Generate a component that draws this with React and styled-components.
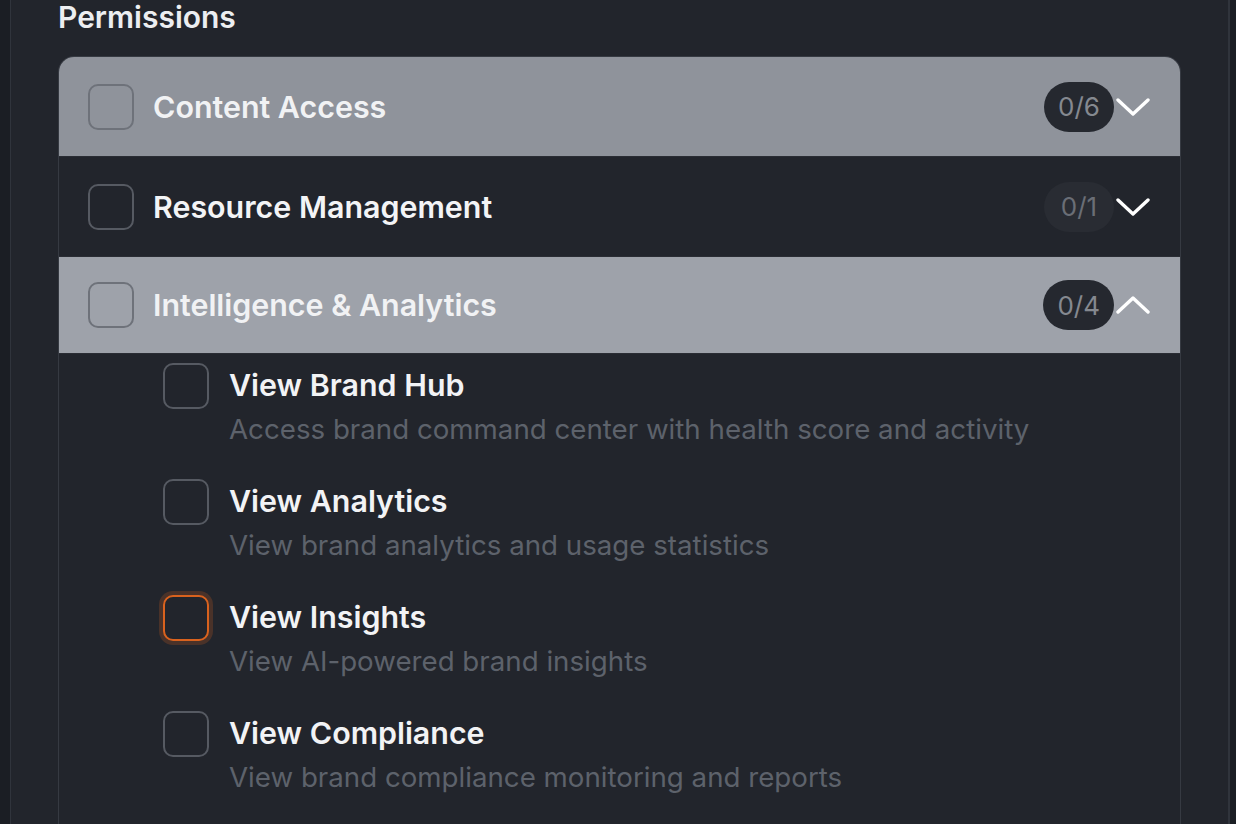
import React from "react";
import styled, { createGlobalStyle, css } from "styled-components";

const Global = createGlobalStyle`
  html, body { margin: 0; padding: 0; background: #1b1e24; }
  body { font-family: Inter, "Noto Sans", sans-serif; -webkit-font-smoothing: antialiased; }
  * { box-sizing: border-box; }
`;

const Page = styled.div`
  height: 824px;
  overflow: hidden;
  padding-left: 10px;
  display: flex;
`;

const Panel = styled.div`
  width: 1220px;
  height: 100%;
  background: #22252c;
  border-left: 1px solid #30343c;
  border-right: 2px solid #30343c;
  padding: 0 47px 0 47px;
  display: flex;
  flex-direction: column;
`;

const Heading = styled.h2`
  margin: 0;
  flex: none;
  font-size: 30px;
  line-height: 34px;
  font-weight: 600;
  color: #eceef1;
`;

const Card = styled.div`
  margin-top: 22px;
  border: 1px solid #363a42;
  border-bottom: none;
  border-radius: 16px 16px 0 0;
  overflow: hidden;
  flex: 1 0 auto;
  display: flex;
  flex-direction: column;
`;

const tones = {
  grey: css`
    background: #8f939b;
  `,
  light: css`
    background: #9ea2aa;
  `,
  dark: css`
    background: #22252c;
  `,
};

const HeaderRow = styled.div`
  flex: none;
  height: ${(p) => p.$h}px;
  display: flex;
  align-items: center;
  padding: 0 30px 0 29px;
  border-bottom: 1px solid #2a2d34;
  ${(p) => tones[p.$tone]}
`;

const Box = styled.span`
  width: 46px;
  height: 46px;
  flex: none;
  border-radius: 10px;
  border: 2px solid ${(p) => (p.$onGrey ? "#6e727a" : "#565a62")};
  background: ${(p) => (p.$onGrey ? "transparent" : "#22252c")};
  ${(p) =>
    p.$focus &&
    css`
      border-color: #d9621e;
      box-shadow: 0 0 0 4px rgba(217, 98, 30, 0.22);
    `}
`;

const GroupLabel = styled.span`
  margin-left: 19px;
  flex: 1;
  font-size: 30.4px;
  font-weight: 600;
  color: ${(p) => (p.$onGrey ? "#f1f2f4" : "#f3f4f6")};
`;

const Badge = styled.span`
  height: 50px;
  min-width: 70px;
  padding: 0 14px;
  border-radius: 25px;
  display: inline-flex;
  align-items: center;
  justify-content: center;
  font-size: 26px;
  background: ${(p) => (p.$onGrey ? "#25282f" : "#292c33")};
  color: ${(p) => (p.$onGrey ? "#858990" : "#6a6e76")};
`;

const Chevron = styled.svg`
  width: 34px;
  height: 20px;
  margin-left: 2px;
  flex: none;
`;

const List = styled.div`
  flex: none;
  padding: 9px 0 0 104px;
  display: flex;
  flex-direction: column;
`;

const Item = styled.div`
  flex: none;
  height: 116px;
  display: grid;
  grid-template-columns: 46px 1fr;
  grid-template-rows: 46px 40px;
  column-gap: 20px;
  align-content: start;
`;

const ItemTitle = styled.div`
  font-size: 30.4px;
  line-height: 45px;
  font-weight: 600;
  color: #f2f3f5;
`;

const ItemDesc = styled.div`
  grid-column: 2;
  font-size: 27.7px;
  line-height: 40px;
  color: #5d626b;
`;

const ChevronIcon = ({ up }) => (
  <Chevron viewBox="0 0 34 20">
    <polyline
      points={up ? "2,17 17,3 32,17" : "2,3 17,17 32,3"}
      fill="none"
      stroke="#ffffff"
      strokeWidth="3.4"
      strokeLinecap="round"
      strokeLinejoin="round"
    />
  </Chevron>
);

const groups = [
  { label: "Content Access", count: "0/6", tone: "grey", h: 100 },
  { label: "Resource Management", count: "0/1", tone: "dark", h: 100 },
  { label: "Intelligence & Analytics", count: "0/4", tone: "light", h: 97, open: true },
];

const items = [
  { title: "View Brand Hub", desc: "Access brand command center with health score and activity" },
  { title: "View Analytics", desc: "View brand analytics and usage statistics" },
  { title: "View Insights", desc: "View AI-powered brand insights", focus: true },
  { title: "View Compliance", desc: "View brand compliance monitoring and reports" },
];

export default function App() {
  return (
    <>
      <Global />
      <Page>
        <Panel>
          <Heading>Permissions</Heading>
          <Card>
            {groups.map((g) => {
              const onGrey = g.tone !== "dark";
              return (
                <HeaderRow key={g.label} $tone={g.tone} $h={g.h}>
                  <Box $onGrey={onGrey} />
                  <GroupLabel $onGrey={onGrey}>{g.label}</GroupLabel>
                  <Badge $onGrey={onGrey}>{g.count}</Badge>
                  <ChevronIcon up={g.open} />
                </HeaderRow>
              );
            })}
            <List>
              {items.map((it) => (
                <Item key={it.title}>
                  <Box $focus={it.focus} />
                  <ItemTitle>{it.title}</ItemTitle>
                  <ItemDesc>{it.desc}</ItemDesc>
                </Item>
              ))}
            </List>
          </Card>
        </Panel>
      </Page>
    </>
  );
}
